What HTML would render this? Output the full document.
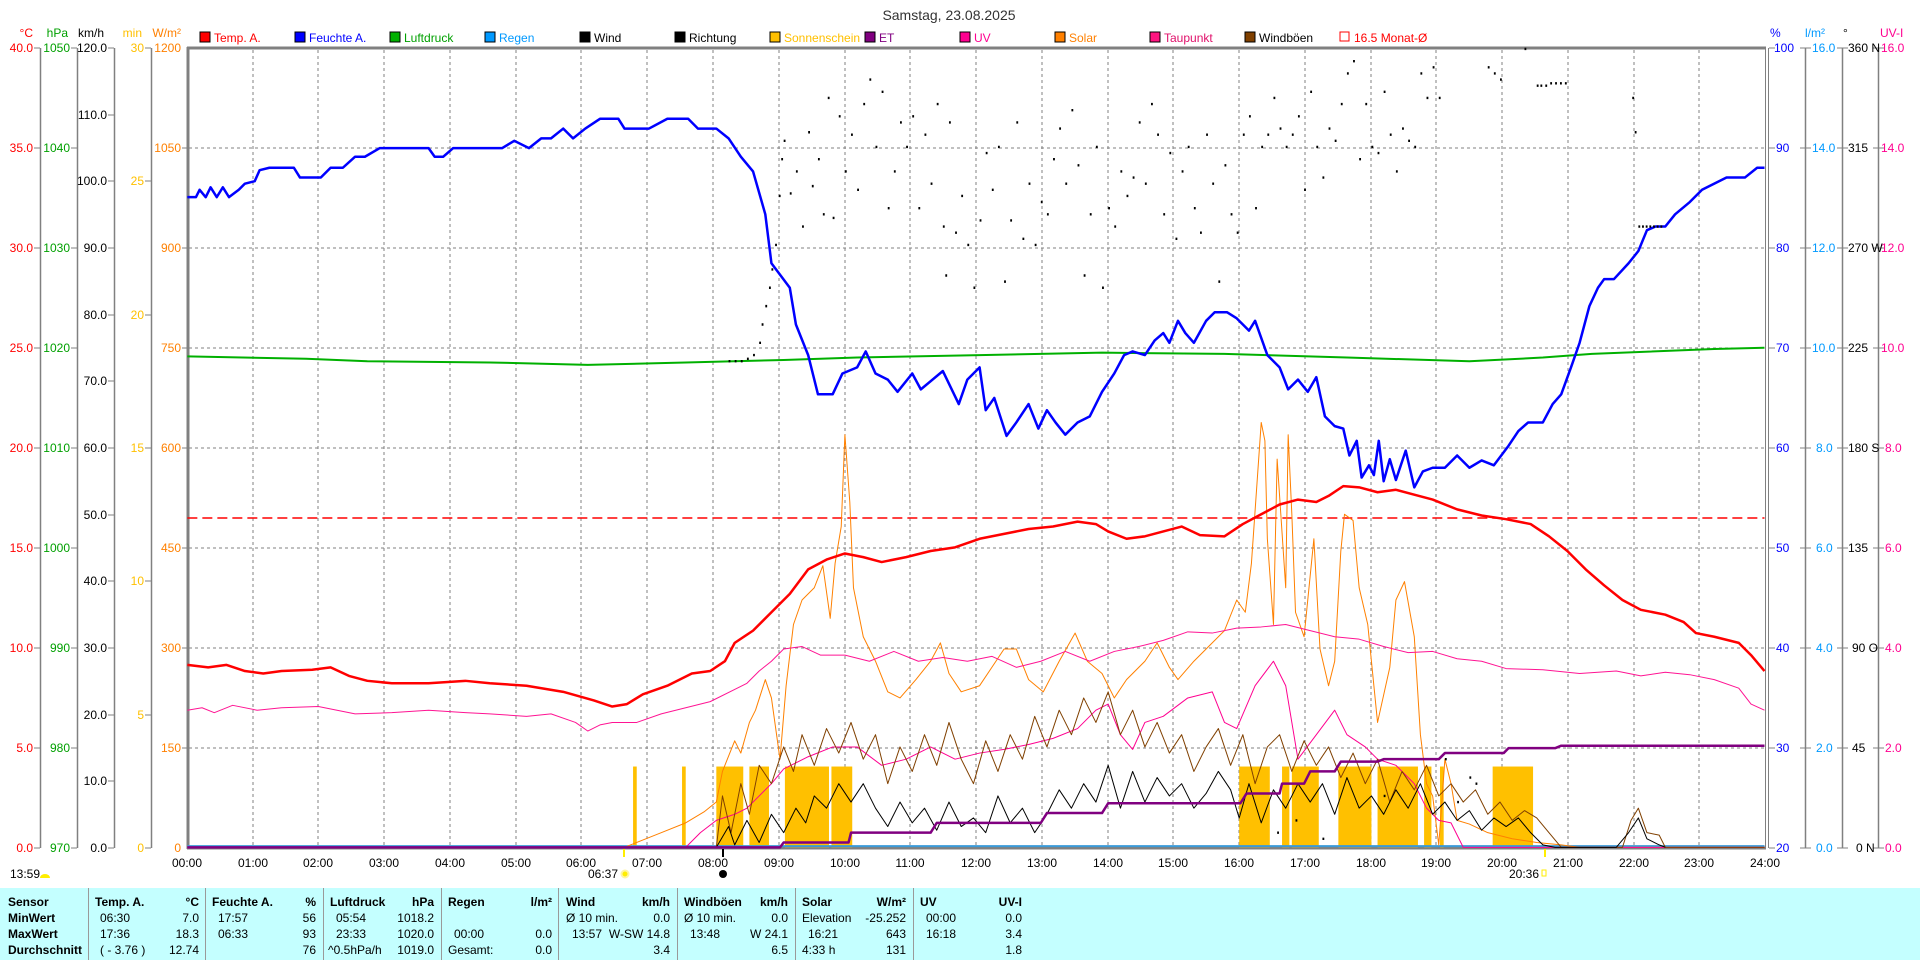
<!DOCTYPE html>
<html><head><meta charset="utf-8"><style>
html,body{margin:0;padding:0;background:#fff;width:1920px;height:960px;overflow:hidden;font-family:"Liberation Sans",sans-serif;}
svg{position:absolute;left:0;top:0}
svg text{font-family:"Liberation Sans",sans-serif;font-size:12px}
#tbl{position:absolute;left:0;top:888px;width:1920px;height:72px;font-size:12px;}
#tbl .c{position:absolute;top:0;height:72px;border-left:1px solid #9a9a9a}
#tbl span{position:absolute;white-space:nowrap;line-height:14px}
.b{font-weight:bold}
</style></head><body>
<svg width="1920" height="960" viewBox="0 0 1920 960">
<rect x="0" y="888" width="1920" height="72" fill="#c4ffff"/>
<text x="949" y="20" text-anchor="middle" style="font-size:14px" fill="#333">Samstag, 23.08.2025</text>
<g>
<rect x="200" y="32" width="10" height="10" fill="#f00" stroke="#000"/><text x="214" y="42" fill="#f00">Temp. A.</text>
<rect x="295" y="32" width="10" height="10" fill="#00f" stroke="#000"/><text x="309" y="42" fill="#00f">Feuchte A.</text>
<rect x="390" y="32" width="10" height="10" fill="#00b000" stroke="#000"/><text x="404" y="42" fill="#00a000">Luftdruck</text>
<rect x="485" y="32" width="10" height="10" fill="#0099ff" stroke="#000"/><text x="499" y="42" fill="#0099ff">Regen</text>
<rect x="580" y="32" width="10" height="10" fill="#000" stroke="#000"/><text x="594" y="42" fill="#000">Wind</text>
<rect x="675" y="32" width="10" height="10" fill="#000" stroke="#000"/><text x="689" y="42" fill="#000">Richtung</text>
<rect x="770" y="32" width="10" height="10" fill="#ffc000" stroke="#000"/><text x="784" y="42" fill="#ffc000">Sonnenschein</text>
<rect x="865" y="32" width="10" height="10" fill="#800080" stroke="#000"/><text x="879" y="42" fill="#800080">ET</text>
<rect x="960" y="32" width="10" height="10" fill="#ff0090" stroke="#000"/><text x="974" y="42" fill="#ff0090">UV</text>
<rect x="1055" y="32" width="10" height="10" fill="#ff8000" stroke="#000"/><text x="1069" y="42" fill="#ff8000">Solar</text>
<rect x="1150" y="32" width="10" height="10" fill="#ff1480" stroke="#000"/><text x="1164" y="42" fill="#e0106a">Taupunkt</text>
<rect x="1245" y="32" width="10" height="10" fill="#804000" stroke="#000"/><text x="1259" y="42" fill="#000">Windböen</text>
<rect x="1340" y="32" width="9" height="9" fill="none" stroke="#f00"/><text x="1354" y="42" fill="#f00">16.5 Monat-Ø</text>
</g>
<text x="33" y="37" text-anchor="end" fill="#f00">°C</text>
<text x="68" y="37" text-anchor="end" fill="#00a000">hPa</text>
<text x="104" y="37" text-anchor="end" fill="#000">km/h</text>
<text x="142" y="37" text-anchor="end" fill="#ffc000">min</text>
<text x="181" y="37" text-anchor="end" fill="#ff8000">W/m²</text>
<text x="1770" y="37" fill="#00f">%</text>
<text x="1805" y="37" fill="#0099ff">l/m²</text>
<text x="1843" y="37" fill="#000">°</text>
<text x="1880" y="37" fill="#ff0090">UV-I</text>
<g stroke="#808080" stroke-width="1" stroke-dasharray="3,3">
<line x1="253" y1="50" x2="253" y2="848"/><line x1="318" y1="50" x2="318" y2="848"/><line x1="384" y1="50" x2="384" y2="848"/><line x1="450" y1="50" x2="450" y2="848"/><line x1="516" y1="50" x2="516" y2="848"/><line x1="581" y1="50" x2="581" y2="848"/><line x1="647" y1="50" x2="647" y2="848"/><line x1="713" y1="50" x2="713" y2="848"/><line x1="779" y1="50" x2="779" y2="848"/><line x1="845" y1="50" x2="845" y2="848"/><line x1="910" y1="50" x2="910" y2="848"/><line x1="976" y1="50" x2="976" y2="848"/><line x1="1042" y1="50" x2="1042" y2="848"/><line x1="1108" y1="50" x2="1108" y2="848"/><line x1="1173" y1="50" x2="1173" y2="848"/><line x1="1239" y1="50" x2="1239" y2="848"/><line x1="1305" y1="50" x2="1305" y2="848"/><line x1="1371" y1="50" x2="1371" y2="848"/><line x1="1436" y1="50" x2="1436" y2="848"/><line x1="1502" y1="50" x2="1502" y2="848"/><line x1="1568" y1="50" x2="1568" y2="848"/><line x1="1634" y1="50" x2="1634" y2="848"/><line x1="1699" y1="50" x2="1699" y2="848"/>
<line x1="189" y1="148" x2="1765" y2="148"/><line x1="189" y1="248" x2="1765" y2="248"/><line x1="189" y1="348" x2="1765" y2="348"/><line x1="189" y1="448" x2="1765" y2="448"/><line x1="189" y1="548" x2="1765" y2="548"/><line x1="189" y1="648" x2="1765" y2="648"/><line x1="189" y1="748" x2="1765" y2="748"/>
</g>
<g stroke="#808080" stroke-width="1.5" fill="none">
<line x1="40.5" y1="48" x2="40.5" y2="848"/><line x1="77.5" y1="48" x2="77.5" y2="848"/><line x1="114.5" y1="48" x2="114.5" y2="848"/><line x1="151.5" y1="48" x2="151.5" y2="848"/>
<line x1="1805.5" y1="48" x2="1805.5" y2="848"/><line x1="1842.5" y1="48" x2="1842.5" y2="848"/><line x1="1878.5" y1="48" x2="1878.5" y2="848"/>
</g>
<g stroke="#808080" stroke-width="3"><line x1="188" y1="47" x2="188" y2="849"/><line x1="187" y1="48" x2="1766" y2="48"/><line x1="187" y1="848" x2="1766" y2="848"/></g>
<g stroke="#808080" stroke-width="1"><line x1="1765.5" y1="48" x2="1765.5" y2="848"/><line x1="1768.5" y1="48" x2="1768.5" y2="848"/></g>
<g stroke="#808080" stroke-width="1">
<path d="M34 48h6M34 148h6M34 248h6M34 348h6M34 448h6M34 548h6M34 648h6M34 748h6M34 848h6
M71 48h6M71 148h6M71 248h6M71 348h6M71 448h6M71 548h6M71 648h6M71 748h6M71 848h6
M108 48h6M108 115h6M108 181h6M108 248h6M108 315h6M108 381h6M108 448h6M108 515h6M108 581h6M108 648h6M108 715h6M108 781h6M108 848h6
M145 48h6M145 181h6M145 315h6M145 448h6M145 581h6M145 715h6M145 848h6
M182 148h6M182 248h6M182 348h6M182 448h6M182 548h6M182 648h6M182 748h6
M1769 48h6M1769 148h6M1769 248h6M1769 348h6M1769 448h6M1769 548h6M1769 648h6M1769 748h6M1769 848h6
M1800 48h11M1800 148h11M1800 248h11M1800 348h11M1800 448h11M1800 548h11M1800 648h11M1800 748h11M1800 848h11
M1837 48h11M1837 148h11M1837 248h11M1837 348h11M1837 448h11M1837 548h11M1837 648h11M1837 748h11M1837 848h11
M1873 48h11M1873 148h11M1873 248h11M1873 348h11M1873 448h11M1873 548h11M1873 648h11M1873 748h11M1873 848h11"/>
</g>
<g text-anchor="end" fill="#f00">
<text x="33" y="52">40.0</text><text x="33" y="152">35.0</text><text x="33" y="252">30.0</text><text x="33" y="352">25.0</text><text x="33" y="452">20.0</text><text x="33" y="552">15.0</text><text x="33" y="652">10.0</text><text x="33" y="752">5.0</text><text x="33" y="852">0.0</text>
</g>
<g text-anchor="end" fill="#00a000">
<text x="70" y="52">1050</text><text x="70" y="152">1040</text><text x="70" y="252">1030</text><text x="70" y="352">1020</text><text x="70" y="452">1010</text><text x="70" y="552">1000</text><text x="70" y="652">990</text><text x="70" y="752">980</text><text x="70" y="852">970</text>
</g>
<g text-anchor="end" fill="#000">
<text x="107" y="52">120.0</text><text x="107" y="119">110.0</text><text x="107" y="185">100.0</text><text x="107" y="252">90.0</text><text x="107" y="319">80.0</text><text x="107" y="385">70.0</text><text x="107" y="452">60.0</text><text x="107" y="519">50.0</text><text x="107" y="585">40.0</text><text x="107" y="652">30.0</text><text x="107" y="719">20.0</text><text x="107" y="785">10.0</text><text x="107" y="852">0.0</text>
</g>
<g text-anchor="end" fill="#ffc000">
<text x="144" y="52">30</text><text x="144" y="185">25</text><text x="144" y="319">20</text><text x="144" y="452">15</text><text x="144" y="585">10</text><text x="144" y="719">5</text><text x="144" y="852">0</text>
</g>
<g text-anchor="end" fill="#ff8000">
<text x="181" y="52">1200</text><text x="181" y="152">1050</text><text x="181" y="252">900</text><text x="181" y="352">750</text><text x="181" y="452">600</text><text x="181" y="552">450</text><text x="181" y="652">300</text><text x="181" y="752">150</text><text x="181" y="852">0</text>
</g>
<g fill="#00f">
<text x="1774" y="52">100</text><text x="1776" y="152">90</text><text x="1776" y="252">80</text><text x="1776" y="352">70</text><text x="1776" y="452">60</text><text x="1776" y="552">50</text><text x="1776" y="652">40</text><text x="1776" y="752">30</text><text x="1776" y="852">20</text>
</g>
<g fill="#0099ff">
<text x="1812" y="52">16.0</text><text x="1812" y="152">14.0</text><text x="1812" y="252">12.0</text><text x="1812" y="352">10.0</text><text x="1816" y="452">8.0</text><text x="1816" y="552">6.0</text><text x="1816" y="652">4.0</text><text x="1816" y="752">2.0</text><text x="1816" y="852">0.0</text>
</g>
<g fill="#000">
<text x="1848" y="52">360 N</text><text x="1848" y="152">315</text><text x="1848" y="252">270 W</text><text x="1848" y="352">225</text><text x="1848" y="452">180 S</text><text x="1848" y="552">135</text><text x="1852" y="652">90 O</text><text x="1852" y="752">45</text><text x="1856" y="852">0 N</text>
</g>
<g fill="#ff0090">
<text x="1881" y="52">16.0</text><text x="1881" y="152">14.0</text><text x="1881" y="252">12.0</text><text x="1881" y="352">10.0</text><text x="1885" y="452">8.0</text><text x="1885" y="552">6.0</text><text x="1885" y="652">4.0</text><text x="1885" y="752">2.0</text><text x="1885" y="852">0.0</text>
</g>
<g text-anchor="middle" fill="#000">
<text x="187" y="867">00:00</text><text x="253" y="867">01:00</text><text x="318" y="867">02:00</text><text x="384" y="867">03:00</text><text x="450" y="867">04:00</text><text x="516" y="867">05:00</text><text x="581" y="867">06:00</text><text x="647" y="867">07:00</text><text x="713" y="867">08:00</text><text x="779" y="867">09:00</text><text x="845" y="867">10:00</text><text x="910" y="867">11:00</text><text x="976" y="867">12:00</text><text x="1042" y="867">13:00</text><text x="1108" y="867">14:00</text><text x="1173" y="867">15:00</text><text x="1239" y="867">16:00</text><text x="1305" y="867">17:00</text><text x="1371" y="867">18:00</text><text x="1436" y="867">19:00</text><text x="1502" y="867">20:00</text><text x="1568" y="867">21:00</text><text x="1634" y="867">22:00</text><text x="1699" y="867">23:00</text><text x="1765" y="867">24:00</text>
</g>
<text x="10" y="878" fill="#000">13:59</text>
<path d="M40 878a5 4 0 0 1 10 0z" fill="#ffee00"/>
<text x="588" y="878" fill="#000">06:37</text>
<circle cx="625" cy="874" r="3.5" fill="#ffee00" stroke="#fff5a0" stroke-width="2"/>
<line x1="624" y1="849" x2="624" y2="857" stroke="#ffee00" stroke-width="2"/>
<circle cx="723" cy="874" r="4" fill="#000"/><line x1="723" y1="849" x2="723" y2="857" stroke="#000" stroke-width="2"/>
<text x="1509" y="878" fill="#000">20:36</text>
<rect x="1542" y="870" width="4" height="6" fill="none" stroke="#ffee00"/>
<line x1="1545" y1="849" x2="1545" y2="857" stroke="#ffee00" stroke-width="2"/>

<g transform="scale(1.22449)" fill="none" stroke-linejoin="round">
<g fill="#ffc000" stroke="none">
<rect x="517" y="626" width="3" height="66"/><rect x="557" y="626" width="3" height="66"/>
<rect x="585" y="626" width="22" height="66"/><rect x="612" y="626" width="16" height="66"/><rect x="641" y="626" width="36" height="66"/><rect x="679" y="626" width="17" height="66"/>
<rect x="1012" y="626" width="25" height="66"/><rect x="1047" y="626" width="6" height="66"/><rect x="1055" y="626" width="22" height="66"/><rect x="1093" y="626" width="27" height="66"/><rect x="1125" y="626" width="33" height="66"/><rect x="1163" y="626" width="6" height="66"/><rect x="1176" y="626" width="3" height="66"/><rect x="1219" y="626" width="33" height="66"/>
</g>
<line x1="153" y1="691" x2="1441" y2="691" stroke="#3a9ad8" stroke-width="2" vector-effect="non-scaling-stroke"/>
<line x1="153" y1="423" x2="1441" y2="423" stroke="#f00" stroke-width="1.5" stroke-dasharray="10,5" vector-effect="non-scaling-stroke"/>
<polyline stroke="#ff8000" stroke-width="1" vector-effect="non-scaling-stroke" points="153,692 510,692 520,688 540,680 560,672 575,663 585,655 590,630 600,605 605,615 612,590 617,580 625,555 630,570 637,620 642,560 648,510 655,490 665,480 672,462 678,505 682,460 687,430 690,355 694,410 697,480 705,520 715,540 725,565 735,570 748,555 760,540 768,525 775,550 785,565 800,560 810,545 820,530 830,530 840,555 852,565 865,540 878,517 888,540 900,550 910,570 920,555 935,540 945,525 955,545 962,555 975,540 985,530 1000,515 1010,490 1017,500 1022,460 1030,345 1033,360 1035,440 1040,510 1043,375 1050,480 1052,355 1055,420 1058,500 1065,520 1073,440 1078,530 1085,560 1090,540 1095,450 1098,420 1105,425 1110,480 1117,510 1125,590 1135,545 1140,490 1147,475 1155,520 1160,600 1165,640 1170,650 1175,690 1180,620 1185,640 1190,670 1200,673 1215,680 1235,685 1255,688 1275,690 1290,692 1441,692"/>
<polyline stroke="#ff1493" stroke-width="1" vector-effect="non-scaling-stroke" points="153,580 165,578 175,582 190,576 210,580 230,578 260,577 290,583 320,582 350,580 380,582 400,583 430,585 450,583 470,590 480,597 490,592 500,590 520,590 540,583 560,578 580,573 600,563 610,558 620,548 630,540 640,530 655,528 670,535 690,535 710,540 730,532 750,540 770,537 790,540 810,536 830,545 850,540 870,532 890,540 910,532 930,528 950,523 970,516 990,517 1010,513 1030,512 1050,510 1070,515 1090,520 1110,522 1130,528 1150,533 1170,532 1190,538 1210,540 1230,546 1260,547 1290,550 1320,548 1340,552 1360,549 1380,551 1400,555 1420,562 1430,575 1441,580"/>
<polyline stroke="#ff0090" stroke-width="1" vector-effect="non-scaling-stroke" points="153,692 560,692 572,680 585,670 600,665 610,660 620,650 630,640 640,628 660,618 680,610 700,610 720,625 740,620 760,610 780,620 800,615 820,612 840,608 860,603 880,595 895,580 905,575 915,600 925,612 935,590 950,585 970,570 990,565 1000,590 1010,595 1025,560 1040,540 1050,560 1060,620 1075,600 1090,580 1100,600 1115,610 1125,620 1140,625 1155,640 1165,660 1175,670 1185,672 1195,692 1441,692"/>
<polyline stroke="#804000" stroke-width="1" vector-effect="non-scaling-stroke" points="153,692 585,692 590,650 597,680 605,640 612,665 620,625 630,640 640,610 648,630 655,600 665,625 675,595 685,615 695,590 705,620 715,600 725,640 735,610 745,630 755,600 765,625 775,590 785,620 795,640 805,605 815,630 825,600 835,620 845,585 855,610 865,580 875,600 885,570 895,590 905,565 915,600 925,580 935,610 945,590 955,615 965,600 975,630 985,610 995,595 1005,625 1015,600 1025,640 1035,610 1045,600 1055,630 1065,605 1075,625 1085,610 1095,635 1105,615 1115,640 1125,620 1135,655 1145,630 1155,645 1165,625 1175,650 1185,640 1195,655 1205,645 1215,665 1225,655 1235,670 1245,662 1255,668 1265,680 1275,692 1325,692 1332,670 1338,660 1345,680 1355,682 1360,692 1441,692"/>
<polyline stroke="#000" stroke-width="1" vector-effect="non-scaling-stroke" points="585,692 595,675 600,690 610,670 620,688 630,665 640,680 650,660 658,672 665,650 675,660 685,640 695,655 705,640 715,660 725,675 735,655 745,672 755,660 765,678 775,655 785,675 795,668 805,680 815,650 825,672 835,660 845,680 855,665 865,645 875,660 885,640 895,655 905,625 915,660 925,630 935,655 945,635 955,650 965,640 975,660 985,648 995,630 1005,645 1012,668 1020,640 1030,672 1040,645 1050,660 1060,640 1070,655 1080,640 1090,665 1100,635 1110,660 1120,650 1130,665 1140,645 1150,660 1160,640 1170,665 1180,655 1190,670 1200,662 1210,678 1220,668 1230,675 1240,668 1250,680 1260,690 1270,692 1320,692 1330,680 1338,668 1345,685 1355,690 1360,692"/>
<polyline stroke="#800080" stroke-width="2.5" vector-effect="non-scaling-stroke" points="153,692 637,692 640,688 693,688 695,680 760,680 765,672 850,672 855,664 900,664 905,656 1013,656 1018,648 1045,648 1047,640 1065,640 1070,630 1090,630 1095,622 1125,622 1130,620 1175,620 1180,615 1228,615 1232,611 1270,611 1275,609 1441,609"/>
<polyline stroke="#00b000" stroke-width="2" vector-effect="non-scaling-stroke" points="153,291 250,293 300,295 400,296 480,298 560,296 640,294 700,292 800,290 900,288 1000,289 1100,292 1200,295 1260,292 1300,289 1400,285 1441,284"/>
<polyline stroke="#0000ff" stroke-width="2.5" vector-effect="non-scaling-stroke" points="153,161 160,161 163,155 168,161 172,153 177,161 182,153 187,161 195,155 200,150 208,148 212,139 220,137 240,137 245,145 262,145 270,137 280,137 290,128 298,128 310,121 350,121 355,128 362,128 370,121 410,121 420,115 432,121 442,113 450,113 460,105 468,113 478,105 490,97 505,97 510,105 520,105 530,105 545,97 562,97 570,105 585,105 595,113 605,128 615,140 625,175 630,215 645,235 650,265 660,290 668,322 680,322 688,305 700,300 707,287 715,305 725,310 733,320 745,305 752,318 770,303 783,330 790,310 800,300 805,335 812,325 822,356 830,345 840,330 848,350 855,335 862,345 870,355 880,345 890,340 900,320 910,305 918,290 925,287 935,290 943,278 950,272 955,280 962,262 968,272 975,280 985,262 992,255 1002,255 1010,260 1020,270 1025,262 1035,290 1045,300 1052,318 1060,310 1068,320 1075,308 1082,340 1090,348 1097,350 1102,372 1108,360 1112,390 1118,380 1122,388 1126,360 1130,393 1135,375 1140,392 1148,368 1155,398 1162,385 1170,382 1180,382 1190,372 1200,382 1210,376 1220,380 1232,364 1240,352 1248,345 1260,345 1268,330 1275,322 1283,300 1290,280 1298,250 1305,235 1310,228 1318,228 1330,215 1338,205 1345,188 1352,185 1360,185 1368,175 1380,165 1390,155 1400,150 1410,145 1425,145 1435,137 1441,137"/>
<polyline stroke="#ff0000" stroke-width="2.5" vector-effect="non-scaling-stroke" points="153,543 170,545 185,543 200,548 215,550 230,548 255,547 270,545 285,552 300,556 320,558 350,558 380,556 400,558 430,560 460,565 485,572 500,577 512,575 525,567 545,560 565,550 580,548 592,540 600,525 615,515 630,500 645,485 660,465 675,457 690,452 705,455 720,459 740,455 760,450 780,447 800,440 820,436 840,432 860,430 880,426 895,428 905,434 920,440 935,438 950,434 965,430 980,437 1000,438 1015,428 1030,420 1045,412 1060,408 1075,410 1085,405 1097,397 1110,398 1125,402 1140,400 1155,404 1170,408 1190,416 1210,421 1230,424 1250,428 1265,438 1280,450 1295,465 1310,478 1325,490 1340,498 1360,502 1375,508 1385,517 1400,520 1420,525 1430,535 1441,548"/>
<path stroke="#000" stroke-width="2.4" vector-effect="non-scaling-stroke" d="M595 295h1.5M600 295h1.5M605 295h1.5M610 293h1.5M615 290h1.5M620 280h1.5M622 265h1.5M625 250h1.5M628 235h1.5M630 220h1.5M633 200h1.5M636 160h1.5M638 130h1.5M640 115h1.5M645 158h1.5M650 140h1.5M655 185h1.5M660 108h1.5M663 152h1.5M668 130h1.5M672 175h1.5M676 80h1.5M680 178h1.5M685 95h1.5M690 140h1.5M695 110h1.5M700 155h1.5M705 85h1.5M710 65h1.5M715 120h1.5M720 75h1.5M725 170h1.5M730 140h1.5M735 100h1.5M740 120h1.5M745 95h1.5M750 170h1.5M755 110h1.5M760 150h1.5M765 85h1.5M770 185h1.5M772 225h1.5M775 100h1.5M780 190h1.5M785 160h1.5M790 200h1.5M795 235h1.5M800 180h1.5M805 125h1.5M810 155h1.5M815 120h1.5M820 230h1.5M825 180h1.5M830 100h1.5M835 195h1.5M840 150h1.5M845 200h1.5M850 165h1.5M855 175h1.5M860 130h1.5M865 105h1.5M870 150h1.5M875 90h1.5M880 135h1.5M885 225h1.5M890 175h1.5M895 120h1.5M900 235h1.5M905 170h1.5M910 185h1.5M915 140h1.5M920 160h1.5M925 145h1.5M930 100h1.5M935 150h1.5M940 85h1.5M945 110h1.5M950 175h1.5M955 125h1.5M960 195h1.5M965 140h1.5M970 120h1.5M975 170h1.5M980 190h1.5M985 110h1.5M990 150h1.5M995 230h1.5M1000 135h1.5M1005 175h1.5M1010 190h1.5M1015 110h1.5M1020 95h1.5M1025 170h1.5M1030 120h1.5M1035 110h1.5M1040 80h1.5M1045 105h1.5M1050 120h1.5M1055 110h1.5M1060 95h1.5M1065 155h1.5M1070 75h1.5M1075 120h1.5M1080 145h1.5M1085 105h1.5M1090 115h1.5M1095 85h1.5M1100 60h1.5M1105 50h1.5M1110 130h1.5M1115 85h1.5M1120 120h1.5M1125 125h1.5M1130 75h1.5M1135 110h1.5M1140 140h1.5M1145 105h1.5M1150 115h1.5M1155 120h1.5M1160 60h1.5M1165 80h1.5M1170 55h1.5M1175 80h1.5M1215 55h1.5M1220 60h1.5M1225 65h1.5M1245 40h1.5M1255 70h1.5M1258 70h1.5M1262 70h1.5M1266 68h1.5M1270 68h1.5M1274 68h1.5M1278 68h1.5M1333 80h1.5M1335 108h1.5M1338 185h1.5M1341 185h1.5M1344 185h1.5M1347 185h1.5M1350 185h1.5M1353 185h1.5M1356 185h1.5M1200 635h1.5M1205 640h1.5M1180 620h1.5M1043 680h1.5M1058 670h1.5M1080 685h1.5M1130 650h1.5M1190 655h1.5"/>
</g>
</svg>
<div id="tbl">
<div class="c" style="left:88px"></div><div class="c" style="left:205px"></div><div class="c" style="left:323px"></div><div class="c" style="left:441px"></div><div class="c" style="left:558px"></div><div class="c" style="left:677px"></div><div class="c" style="left:795px"></div><div class="c" style="left:913px"></div>
<span class="b" style="left:8px;top:7px">Sensor</span><span class="b" style="left:8px;top:23px">MinWert</span><span class="b" style="left:8px;top:39px">MaxWert</span><span class="b" style="left:8px;top:55px">Durchschnitt</span>
<span class="b" style="left:95px;top:7px">Temp. A.</span><span class="b" style="right:1721px;top:7px">°C</span>
<span style="left:100px;top:23px">06:30</span><span style="right:1721px;top:23px">7.0</span>
<span style="left:100px;top:39px">17:36</span><span style="right:1721px;top:39px">18.3</span>
<span style="left:100px;top:55px">( - 3.76 )</span><span style="right:1721px;top:55px">12.74</span>
<span class="b" style="left:212px;top:7px">Feuchte A.</span><span class="b" style="right:1604px;top:7px">%</span>
<span style="left:218px;top:23px">17:57</span><span style="right:1604px;top:23px">56</span>
<span style="left:218px;top:39px">06:33</span><span style="right:1604px;top:39px">93</span>
<span style="right:1604px;top:55px">76</span>
<span class="b" style="left:330px;top:7px">Luftdruck</span><span class="b" style="right:1486px;top:7px">hPa</span>
<span style="left:336px;top:23px">05:54</span><span style="right:1486px;top:23px">1018.2</span>
<span style="left:336px;top:39px">23:33</span><span style="right:1486px;top:39px">1020.0</span>
<span style="left:328px;top:55px">^0.5hPa/h</span><span style="right:1486px;top:55px">1019.0</span>
<span class="b" style="left:448px;top:7px">Regen</span><span class="b" style="right:1368px;top:7px">l/m²</span>
<span style="left:454px;top:39px">00:00</span><span style="right:1368px;top:39px">0.0</span>
<span style="left:448px;top:55px">Gesamt:</span><span style="right:1368px;top:55px">0.0</span>
<span class="b" style="left:566px;top:7px">Wind</span><span class="b" style="right:1250px;top:7px">km/h</span>
<span style="left:566px;top:23px">Ø 10 min.</span><span style="right:1250px;top:23px">0.0</span>
<span style="left:572px;top:39px">13:57</span><span style="right:1250px;top:39px">W-SW 14.8</span>
<span style="right:1250px;top:55px">3.4</span>
<span class="b" style="left:684px;top:7px">Windböen</span><span class="b" style="right:1132px;top:7px">km/h</span>
<span style="left:684px;top:23px">Ø 10 min.</span><span style="right:1132px;top:23px">0.0</span>
<span style="left:690px;top:39px">13:48</span><span style="right:1132px;top:39px">W 24.1</span>
<span style="right:1132px;top:55px">6.5</span>
<span class="b" style="left:802px;top:7px">Solar</span><span class="b" style="right:1014px;top:7px">W/m²</span>
<span style="left:802px;top:23px">Elevation</span><span style="right:1014px;top:23px">-25.252</span>
<span style="left:808px;top:39px">16:21</span><span style="right:1014px;top:39px">643</span>
<span style="left:802px;top:55px">4:33 h</span><span style="right:1014px;top:55px">131</span>
<span class="b" style="left:920px;top:7px">UV</span><span class="b" style="right:898px;top:7px">UV-I</span>
<span style="left:926px;top:23px">00:00</span><span style="right:898px;top:23px">0.0</span>
<span style="left:926px;top:39px">16:18</span><span style="right:898px;top:39px">3.4</span>
<span style="right:898px;top:55px">1.8</span>
</div>
</body></html>
